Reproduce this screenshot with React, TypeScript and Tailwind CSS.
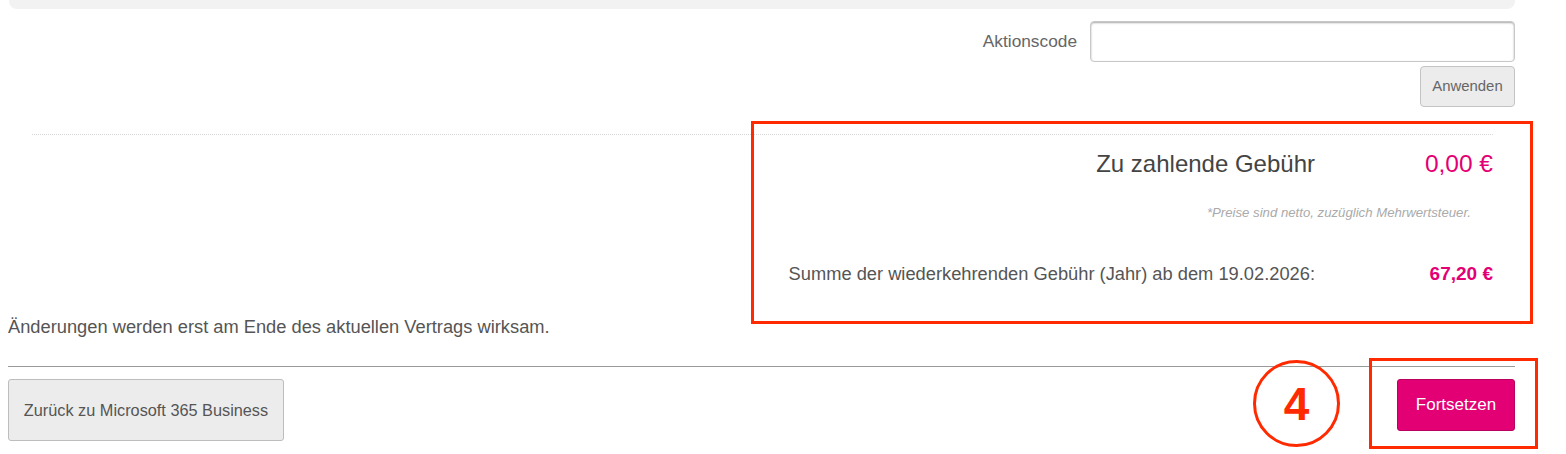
export default function App() {
  const font = { fontFamily: '"Liberation Sans", Arial, sans-serif' }

  return (
    <div className="relative w-[1566px] h-[454px] overflow-hidden bg-white" style={font}>
      <div className="ml-[8px] w-[1507px] flex flex-col">
        {/* grey panel end */}
        <div className="ml-[1px] h-[9px] bg-[#f2f2f2] rounded-b-[8px]" />

        {/* promo code */}
        <div className="mt-[12px] flex items-center justify-end gap-[13px]">
          <label className="text-[17.3px] text-[#666]">Aktionscode</label>
          <input
            className="w-[425px] h-[41px] border border-[#c8c8c8] rounded-[4px] shadow-[inset_0_1px_2px_rgba(0,0,0,0.35)] outline-none px-2"
            type="text"
          />
        </div>
        <div className="mt-[4px] flex justify-end">
          <button className="w-[95px] h-[41px] bg-[#ececec] border border-[#c4c4c4] rounded-[4px] text-[14.9px] text-[#666]">
            Anwenden
          </button>
        </div>

        {/* summary */}
        <div className="mt-[27px] ml-[24px] mr-[22px] border-t border-dotted border-[#d6d6d6]">
          <div className="mt-[14px] flex justify-end items-center h-[30px]">
            <span className="text-[24px] text-[#444]">Zu zahlende Gebühr</span>
            <span className="w-[178px] text-right text-[24.5px] text-[#e20074]">0,00 €</span>
          </div>
          <div className="mt-[26px] pr-[22px] text-right text-[13.2px] italic text-[#aaa] leading-[16px]">
            *Preise sind netto, zuzüglich Mehrwertsteuer.
          </div>
          <div className="mt-[42px] flex justify-end items-center h-[22px]">
            <span className="text-[18.3px] text-[#555]">Summe der wiederkehrenden Gebühr (Jahr) ab dem 19.02.2026:</span>
            <span className="w-[178px] text-right text-[19px] font-bold text-[#e20074]">67,20 €</span>
          </div>
        </div>

        <p className="mt-[31px] text-[18.3px] text-[#555] leading-[22px]">
          Änderungen werden erst am Ende des aktuellen Vertrags wirksam.
        </p>

        <div className="mt-[28px] border-t border-[#9a9a9a]" />

        <div className="mt-[12px] flex justify-between items-start">
          <button className="w-[276px] h-[62px] bg-[#ececec] border border-[#bdbdbd] rounded-[3px] text-[16.3px] text-[#555]">
            Zurück zu Microsoft 365 Business
          </button>
          <button className="w-[118px] h-[52px] bg-[#e20074] border border-[#b8005e] rounded-[3px] text-[17px] text-white">
            Fortsetzen
          </button>
        </div>
      </div>

      {/* annotation overlays */}
      <div className="absolute left-[751px] top-[121px] w-[782px] h-[203px] border-[3px] border-[#ff2a00]" />
      <div className="absolute left-[1369px] top-[358px] w-[169px] h-[91px] border-[3px] border-[#ff2a00]" />
      <div className="absolute left-[1253px] top-[360px] w-[87px] h-[87px] rounded-full border-[3px] border-[#ff2a00] flex items-center justify-center">
        <span className="text-[46px] font-bold text-[#ff2a00] leading-none">4</span>
      </div>
    </div>
  )
}
